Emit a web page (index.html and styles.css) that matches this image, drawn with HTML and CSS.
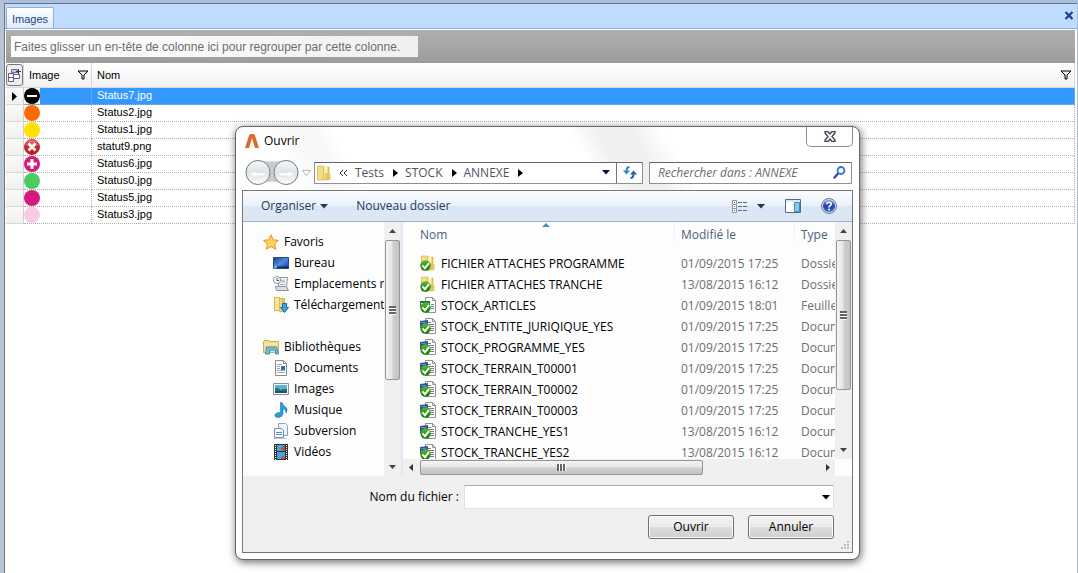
FILE: index.html
```html
<!DOCTYPE html>
<html lang="fr">
<head>
<meta charset="utf-8">
<title>Images</title>
<link rel="stylesheet" href="styles.css">
</head>
<body>
<svg class="symbols" aria-hidden="true">
  <defs>
    <linearGradient id="gold" x1="0" x2="1"><stop offset="0" stop-color="#f6e290"/><stop offset="1" stop-color="#dcb53e"/></linearGradient>
    <linearGradient id="green" x1="0" y1="0" x2="0" y2="1"><stop offset="0" stop-color="#5cb82e"/><stop offset="1" stop-color="#0d7a08"/></linearGradient>
    <linearGradient id="screen" x1="0" y1="0" x2="1" y2="1"><stop offset="0" stop-color="#1c3f9c"/><stop offset=".5" stop-color="#4f8be0"/><stop offset="1" stop-color="#173a8e"/></linearGradient>
    <linearGradient id="disc" x1="0" y1="0" x2="0" y2="1"><stop offset="0" stop-color="#f7f9fa"/><stop offset=".5" stop-color="#dfe4e8"/><stop offset="1" stop-color="#fdfefe"/></linearGradient>
    <linearGradient id="red" x1="0" y1="0" x2="0" y2="1"><stop offset="0" stop-color="#e88"/><stop offset=".5" stop-color="#cf2a2a"/><stop offset="1" stop-color="#d00808"/></linearGradient>
    <linearGradient id="help" x1="0" y1="0" x2="0" y2="1"><stop offset="0" stop-color="#7b9be8"/><stop offset=".5" stop-color="#1b3fb0"/><stop offset="1" stop-color="#3f6fdc"/></linearGradient>
  </defs>
  <symbol id="tick" viewBox="0 0 16 16">
    <circle cx="5.500" cy="10.500" r="5.200" fill="url(#green)"/>
    <path d="M2.500 10.500l2.500 2.700L9 8" fill="none" stroke="#fff" stroke-width="1.900"/>
  </symbol>
  <symbol id="folder" viewBox="0 0 16 16">
    <path d="M1.500 1h6v14h-6z" fill="#f3dd86" stroke="#d8b94e" stroke-width=".8"/>
    <path d="M7.500 2H13v13H7.500z" fill="url(#gold)" stroke="#d8b94e" stroke-width=".6"/><path d="M8.500 1h3v7h-3z" fill="#fdf4c4"/><path d="M12 9h2.500v6H12z" fill="#e6c65a"/>
  </symbol>
  <symbol id="i-folder" viewBox="0 0 16 16"><use href="#folder"/><use href="#tick"/></symbol>
  <symbol id="i-sheet" viewBox="0 0 16 16">
    <path d="M5.500.5h7l3 3v12h-10z" fill="#fff" stroke="#929292"/><path d="M12.500.5v3h3" fill="none" stroke="#929292"/>
    <path d="M8 7.500h2M8 9.500h2M8 11.500h2M11 7.500h3M11 9.500h3M11 11.500h3" stroke="#3e9a6b"/>
    <path d="M.5 4.500h9v5h-9z" fill="#fff" stroke="#1d7145"/><path d="M0 4h10v2H0z" fill="#1d7145"/><use href="#tick"/>
  </symbol>
  <symbol id="i-word" viewBox="0 0 16 16">
    <path d="M5.500.5h7l3 3v12h-10z" fill="#fff" stroke="#929292"/><path d="M12.500.5v3h3" fill="none" stroke="#929292"/>
    <path d="M8 4.500h3M8 6.500h6M8 8.500h6M8 10.500h6M8 12.500h6" stroke="#7d7d7d"/>
    <path d="M0 3l8-1v8H0z" fill="#2b579a"/><path d="M1 4.500h5" stroke="#5f8bc8"/><use href="#tick"/>
  </symbol>
  <symbol id="funnel" viewBox="0 0 12 10"><path d="M1 1h10L7 5v4H5V5z" fill="#ececec" stroke="#000"/></symbol>
</svg>

<main class="frame">
  <div class="tabbar">
    <button class="tab" type="button">Images</button>
    <button class="tabbar-close" type="button" aria-label="Fermer l'onglet">
      <svg width="10" height="9" viewBox="0 0 10 9"><path d="M1.500 1l7 7M8.500 1l-7 7" stroke="#15428b" stroke-width="2.200"/></svg>
    </button>
  </div>
  <div class="groupbar"><span class="grouphint">Faites glisser un en-tête de colonne ici pour regrouper par cette colonne.</span></div>
  <table class="grid">
    <colgroup><col class="col-mark"><col class="col-image"><col></colgroup>
    <thead>
      <tr>
        <th class="chooser"><button class="chooser-btn" type="button" aria-label="Choisir les colonnes">
          <svg width="15" height="16" viewBox="0 0 15 16"><path d="M1.500 6.500h5v8h-5zM6.500 7.500h6v4h-6z" fill="#fff" stroke="#5a5f8e"/><path d="M2 10.500h4" stroke="#5a5f8e"/><path d="M4.500 2.500h6v3h-6z" fill="#c3c6e0" stroke="#6d719c"/><path d="M9 4.500h5M11.500 2v5" stroke="#333964"/></svg>
        </button></th>
        <th><div class="head"><span>Image</span><svg width="12" height="10"><use href="#funnel"/></svg></div></th>
        <th><div class="head"><span>Nom</span><svg width="12" height="10"><use href="#funnel"/></svg></div></th>
      </tr>
    </thead>
    <tbody>
      <tr class="current"><td><svg class="marker" width="6" height="9"><path d="M0 0l5 4.500L0 9z"/></svg></td><td><svg class="pic" viewBox="0 0 16 16"><circle cx="8" cy="8" r="8"/><path d="M3 8h10" stroke="#fff" stroke-width="2"/></svg></td><td>Status7.jpg</td></tr>
      <tr><td></td><td><svg class="pic" viewBox="0 0 16 16"><circle cx="8" cy="8" r="8" fill="#ff6a00"/></svg></td><td>Status2.jpg</td></tr>
      <tr><td></td><td><svg class="pic" viewBox="0 0 16 16"><circle cx="8" cy="8" r="8" fill="#ffe100"/></svg></td><td>Status1.jpg</td></tr>
      <tr><td></td><td><svg class="pic" viewBox="0 0 16 16"><circle cx="8" cy="8" r="7.500" fill="url(#red)" stroke="#b33"/><path d="M4.500 4.500l7 7M11.500 4.500l-7 7" stroke="#fff" stroke-width="2.800"/></svg></td><td>statut9.png</td></tr>
      <tr><td></td><td><svg class="pic" viewBox="0 0 16 16"><circle cx="8" cy="8" r="8" fill="#d6187f"/><path d="M3 8h10M8 3v10" stroke="#fff" stroke-width="3"/></svg></td><td>Status6.jpg</td></tr>
      <tr><td></td><td><svg class="pic" viewBox="0 0 16 16"><circle cx="8" cy="8" r="8" fill="#4ccb60"/></svg></td><td>Status0.jpg</td></tr>
      <tr><td></td><td><svg class="pic" viewBox="0 0 16 16"><circle cx="8" cy="8" r="8" fill="#d6187f"/></svg></td><td>Status5.jpg</td></tr>
      <tr><td></td><td><svg class="pic" viewBox="0 0 16 16"><circle cx="8" cy="8" r="8" fill="#f8cce6"/></svg></td><td>Status3.jpg</td></tr>
    </tbody>
  </table>
</main>

<section class="dialog" role="dialog" aria-labelledby="dlg-title">
  <header class="titlebar">
    <svg width="14" height="14" viewBox="0 0 14 14"><path d="M0 14L4 1.500Q4.500 0 6 0h2q1.500 0 2 1.500L14 14h-4L7 4 4 14z" fill="#dd6a2c"/></svg>
    <h1 id="dlg-title" class="title">Ouvrir</h1>
    <button class="close" type="button" aria-label="Fermer">
      <svg width="12" height="11" viewBox="0 0 12 11"><path d="M1 .5h3l2 2.500 2-2.500h3v1.500L8 5.500 11 9v1.500H8L6 8l-2 2.500H1V9l3-3.500L1 2z" fill="#fff" stroke="#3c3f4c" stroke-width="1.300"/></svg>
    </button>
  </header>
  <div class="navbar">
    <div class="history">
      <svg width="56" height="28" viewBox="0 0 56 28">
        <path d="M14 1Q28 4 42 1a12 12 0 0 1 0 25Q28 19 14 26a12 12 0 0 1 0-25z" fill="#c9cbcd"/>
        <circle cx="14" cy="13.500" r="12" fill="url(#disc)" stroke="#7d8187"/><circle cx="42" cy="13.500" r="12" fill="url(#disc)" stroke="#7d8187"/>
        <path d="M5 14.500l7-3v2h10v2q-2 2-10 1.500v3z" fill="#fbfdfd" stroke="#dde2e5"/><path d="M51 14.500l-7-3v2H34v2q2 2 10 1.500v3z" fill="#fbfdfd" stroke="#dde2e5"/>
      </svg>
      <svg width="9" height="6" viewBox="0 0 9 6"><path d="M.5.5h8l-4 5z" fill="#fff" stroke="#b5b5b5"/></svg>
    </div>
    <div class="address">
      <nav class="crumbs" aria-label="Emplacement">
        <svg width="16" height="16"><use href="#folder"/></svg>
        <svg width="9" height="8" viewBox="0 0 9 8"><path d="M4 1L1 4l3 3M8 1L5 4l3 3" fill="none" stroke="#222"/></svg>
        <a class="crumb" href="#">Tests</a><a class="crumb" href="#">STOCK</a><a class="crumb" href="#">ANNEXE</a>
      </nav>
      <button class="flat" type="button" aria-label="Emplacements précédents"><svg width="8" height="5"><path d="M0 0h8L4 4.500z" fill="#0b0b45"/></svg></button>
      <button class="flat refresh" type="button" aria-label="Actualiser"><svg width="14" height="13" viewBox="0 0 14 13"><path d="M6.500 1Q3.500 1 3.500 5" fill="none" stroke="#2f83cf" stroke-width="2"/><path d="M0 4.500h7L3.500 8.500z" fill="#2f83cf"/><path d="M7.500 12q3 0 3-4" fill="none" stroke="#1f5fb0" stroke-width="2"/><path d="M7 8.500h7l-3.500-4z" fill="#1f5fb0"/></svg></button>
    </div>
    <div class="search">
      <input class="search-input" type="text" placeholder="Rechercher dans : ANNEXE" aria-label="Rechercher dans : ANNEXE">
      <svg width="13" height="13" viewBox="0 0 13 13"><path d="M1.500 11.500l4-4.500" stroke="#2b55a8" stroke-width="2.500" stroke-linecap="round"/><circle cx="8" cy="4.500" r="3.500" fill="#eef7ff" stroke="#3673c6" stroke-width="1.800"/></svg>
    </div>
  </div>
  <div class="client">
    <div class="toolbar">
      <button class="tool" type="button">Organiser<svg width="8" height="5"><path d="M0 0h8L4 4.500z" fill="#1e395b"/></svg></button>
      <button class="tool" type="button">Nouveau dossier</button>
      <div class="toolbar-right">
        <button class="tool views" type="button" aria-label="Affichage"><svg width="16" height="13" viewBox="0 0 16 13"><path d="M.5.5h4v4h-4zM.5 4.500h4v4h-4zM.5 8.500h4v4h-4z" fill="#fff" stroke="#8c949e"/><path d="M2 2.500h1M2 10.500h1" stroke="#2a6ab8"/><path d="M2 6.500h1" stroke="#d22"/><path d="M6 2.500h4M11 2.500h4M6 6.500h4M11 6.500h4M6 10.500h4M11 10.500h4" stroke="#5e6b7c"/></svg><svg width="8" height="5"><path d="M0 0h8L4 4.500z" fill="#1e395b"/></svg></button>
        <button class="tool" type="button" aria-label="Volet de visualisation"><svg width="16" height="14" viewBox="0 0 16 14"><path d="M.5.5h15v13H.5z" fill="#fff" stroke="#4f6a90"/><path d="M1 1h14v2H1z" fill="#dfe8f2"/><path d="M9.500 3.500h5v9h-5z" fill="#83cbe6" stroke="#3b8fb5"/></svg></button>
        <button class="tool" type="button" aria-label="Aide"><svg width="16" height="16" viewBox="0 0 16 16"><circle cx="8" cy="8" r="7.500" fill="#d9d9dd" stroke="#777b88"/><circle cx="8" cy="8" r="6" fill="url(#help)"/><path d="M5.800 6.200q0-2 2.200-2t2.200 1.800q0 1-1.200 1.700T8 9.500" fill="none" stroke="#fff" stroke-width="1.600"/><circle cx="8" cy="11.600" r="1" fill="#fff"/></svg></button>
      </div>
    </div>
    <div class="panes">
      <nav class="tree" aria-label="Volet de navigation">
        <ul class="group">
          <li class="node root"><svg width="16" height="16" viewBox="0 0 16 16"><path d="M8 .8l2.200 5 5.300.6-4 3.500 1.200 5.300L8 12.500l-4.700 2.700 1.200-5.300-4-3.500 5.300-.6z" fill="#ffd35c" stroke="#ee8d1c"/></svg>Favoris</li>
          <li class="node"><svg width="16" height="16" viewBox="0 0 16 16"><path d="M.5 2.500h15v11H.5z" fill="url(#screen)" stroke="#2a4a7c"/><path d="M1 11.500h14V13H1z" fill="#0e2d5c"/><circle cx="2.500" cy="12" r="1.500" fill="#6fc1ef"/></svg>Bureau</li>
          <li class="node"><svg width="16" height="16" viewBox="0 0 16 16"><path d="M5.500 1.500h9l-1 9h-8z" fill="#f3f5f7" stroke="#8d9399"/><path d="M8 3.500h4v3H8z" fill="#a9cbe0"/><path d="M7 8.500h5" stroke="#8fb0c8"/><path d="M2.500 10.500h11l2 4h-12z" fill="#dcdfe2" stroke="#8d9399"/><circle cx="4" cy="4" r="3.500" fill="#fff" stroke="#8d9399"/><path d="M4 2v2.500h2" fill="none" stroke="#555"/></svg>Emplacements récents</li>
          <li class="node"><svg width="16" height="16" viewBox="0 0 16 16"><path d="M1.500.5h5v13h-5z" fill="#f6e6a0" stroke="#d8b854"/><path d="M6.500 1.500h5v13h-5z" fill="url(#gold)" stroke="#d8b854"/><path d="M9.500 6.500h4v4h2l-4 5-4-5h2z" fill="#39a2e8" stroke="#1669b2"/></svg>Téléchargements</li>
        </ul>
        <ul class="group">
          <li class="node root"><svg width="16" height="16" viewBox="0 0 16 16"><path d="M.5 2.500l1-1h5l1 1h8v11H.5z" fill="#f4dc84" stroke="#cfae4c"/><path d="M1 5h14" stroke="#fff3c0"/><path d="M2.500 15l1-7h10l2 7h-3v-4h-6v4z" fill="#6fc0e6" stroke="#3c8fbb"/></svg>Bibliothèques</li>
          <li class="node"><svg width="16" height="16" viewBox="0 0 16 16"><path d="M2.500.5h8l3 3v12h-11z" fill="#fff" stroke="#868b91"/><path d="M10.500.5v3h3" fill="none" stroke="#868b91"/><path d="M4 4.500h5M4 6.500h3M4 8.500h3M4 10.500h8M4 12.500h8" stroke="#9ab"/><path d="M8 6h4v4H8z" fill="#2b6fc0"/></svg>Documents</li>
          <li class="node"><svg width="16" height="16" viewBox="0 0 16 16"><path d="M.5 2.500h15v11H.5z" fill="#fff" stroke="#8a8f95"/><path d="M2 4h12v8H2z" fill="#56b4e4"/><path d="M2 7q3-1 6 2 3-2 6-1v4H2z" fill="#2c7a5a"/><path d="M2 10h12v2H2z" fill="#1d4f86"/></svg>Images</li>
          <li class="node"><svg width="16" height="16" viewBox="0 0 16 16"><path d="M9 .5q1 3 3.500 4.500 3 2 .5 6 .5-3-3-4.500v5q-.5 3.500-4.500 4-4.500 0-3.500-3Q3.500 10 7.500 10.500V.5z" fill="#2f9ae0" stroke="#1c6fb8" stroke-width=".6"/></svg>Musique</li>
          <li class="node"><svg width="16" height="16" viewBox="0 0 16 16"><path d="M5.500.5h7l2 2v10h-9z" fill="#eef4fb" stroke="#8ea3bd"/><path d="M1.500 5.500h7l2 2v7h-9z" fill="#f7fafe" stroke="#6f8fb8"/><path d="M3 9.500h6M3 11.500h6" stroke="#5b86bf"/><path d="M0 15.500h14" stroke="#b9c6d6"/></svg>Subversion</li>
          <li class="node"><svg width="16" height="16" viewBox="0 0 16 16"><path d="M1 0h14v16H1z" fill="#2e3338"/><path d="M4 1h8v6H4zM4 8h8v7H4z" fill="#4ba3dc"/><path d="M8 4l4-3v6H9zM9 12l3 1v2H8z" fill="#b5573c"/><path d="M2.500 1v15M13.500 1v15" stroke="#fff" stroke-dasharray="1 1"/></svg>Vidéos</li>
        </ul>
      </nav>
      <div class="vscroll" aria-hidden="true">
        <svg width="7" height="4"><path d="M0 4h7L3.500 0z" fill="#444"/></svg>
        <div class="track"><div class="thumb thumb-tree"><i class="ridges"></i></div></div>
        <svg width="7" height="4"><path d="M0 0h7L3.500 4z" fill="#444"/></svg>
      </div>
      <div class="listpane">
        <div class="listrow">
          <div class="listview">
            <table class="files">
              <colgroup><col><col class="col-date"><col class="col-type"></colgroup>
              <thead><tr><th>Nom<svg class="sort" width="8" height="4"><path d="M0 4h8L4 0z" fill="#4f8fb5"/></svg></th><th>Modifié le</th><th>Type</th></tr></thead>
              <tbody>
                <tr><td><svg width="16" height="16"><use href="#i-folder"/></svg>FICHIER ATTACHES PROGRAMME</td><td>01/09/2015 17:25</td><td>Dossier de fichiers</td></tr>
                <tr><td><svg width="16" height="16"><use href="#i-folder"/></svg>FICHIER ATTACHES TRANCHE</td><td>13/08/2015 16:12</td><td>Dossier de fichiers</td></tr>
                <tr><td><svg width="16" height="16"><use href="#i-sheet"/></svg>STOCK_ARTICLES</td><td>01/09/2015 18:01</td><td>Feuille</td></tr>
                <tr><td><svg width="16" height="16"><use href="#i-word"/></svg>STOCK_ENTITE_JURIQIQUE_YES</td><td>01/09/2015 17:25</td><td>Document</td></tr>
                <tr><td><svg width="16" height="16"><use href="#i-word"/></svg>STOCK_PROGRAMME_YES</td><td>01/09/2015 17:25</td><td>Document</td></tr>
                <tr><td><svg width="16" height="16"><use href="#i-word"/></svg>STOCK_TERRAIN_T00001</td><td>01/09/2015 17:25</td><td>Document</td></tr>
                <tr><td><svg width="16" height="16"><use href="#i-word"/></svg>STOCK_TERRAIN_T00002</td><td>01/09/2015 17:25</td><td>Document</td></tr>
                <tr><td><svg width="16" height="16"><use href="#i-word"/></svg>STOCK_TERRAIN_T00003</td><td>01/09/2015 17:25</td><td>Document</td></tr>
                <tr><td><svg width="16" height="16"><use href="#i-word"/></svg>STOCK_TRANCHE_YES1</td><td>13/08/2015 16:12</td><td>Document</td></tr>
                <tr><td><svg width="16" height="16"><use href="#i-word"/></svg>STOCK_TRANCHE_YES2</td><td>13/08/2015 16:12</td><td>Document</td></tr>
              </tbody>
            </table>
          </div>
          <div class="vscroll" aria-hidden="true">
            <svg width="7" height="4"><path d="M0 4h7L3.500 0z" fill="#444"/></svg>
            <div class="track"><div class="thumb thumb-list"><i class="ridges"></i></div></div>
            <svg width="7" height="4"><path d="M0 0h7L3.500 4z" fill="#444"/></svg>
          </div>
        </div>
        <div class="hscroll" aria-hidden="true">
          <svg width="4" height="7"><path d="M4 0v7L0 3.500z" fill="#333"/></svg>
          <div class="htrack"><div class="hthumb"><i class="ridges upright"></i></div></div>
          <svg width="4" height="7"><path d="M0 0v7l4-3.500z" fill="#333"/></svg>
        </div>
      </div>
    </div>
    <form class="footer">
      <div class="field">
        <label for="filename">Nom du fichier :</label>
        <div class="combo"><input class="combo-input" id="filename" type="text"><button class="flat" type="button" aria-label="Fichiers récents"><svg width="8" height="5"><path d="M0 0h8L4 4.500z"/></svg></button></div>
      </div>
      <div class="actions"><button class="btn" type="button">Ouvrir</button><button class="btn" type="button">Annuler</button></div>
      <svg class="grip" width="9" height="9" viewBox="0 0 9 9"><path d="M6 0h2v2H6zM3 3h2v2H3zM6 3h2v2H6zM0 6h2v2H0zM3 6h2v2H3zM6 6h2v2H6z" fill="#bcbcbc"/></svg>
    </form>
  </div>
</section>
</body>
</html>
```

FILE: styles.css
```css
* { box-sizing: border-box; }
body { margin: 0; background: #fff; color: #000; font: 11px/16px "Liberation Sans", Arial, sans-serif; }
svg { display: block; flex: none; }
button, input { font: inherit; color: inherit; margin: 0; padding: 0; border: 0; background: none; }
.symbols { position: absolute; width: 0; height: 0; }

/* Main window */
.frame { min-height: 100vh; padding-right: 2px; background: linear-gradient(90deg, #777 1px, #fff 1px); border-left: 4px solid #b6c4d6; border-right: 1px solid #a9bfdc; border-top: 3px solid #a4bfe2; }
.tabbar { display: flex; align-items: flex-end; justify-content: space-between; height: 26px; margin: 0 -2px 0 1px; padding-left: 1px; background: #bfdbff; border-top: 1px solid #6f6f6f; border-bottom: 1px solid #8db2e3; }
.tab { height: 21px; padding: 1px 5px 0; color: #15428b; border: 1px solid #8db2e3; border-bottom: 0; border-radius: 2px 2px 0 0; background: linear-gradient(#fff, #e0ecfb); }
.tabbar-close { padding: 0 3px 8px; }
.groupbar { margin: 1px 0 0 2px; padding: 6px 5px; height: 33px; background: linear-gradient(#b0b0b0, #9c9c9c); }
.grouphint { display: inline-block; height: 21px; padding: 0 18px 0 3px; font-size: 12px; line-height: 23px; color: #6d6d6d; background: linear-gradient(90deg, #fff, #f0f0f0); white-space: nowrap; }

.grid { width: 100%; padding-left: 2px; table-layout: fixed; border-collapse: separate; border-spacing: 0; }
.col-mark { width: 18px; }
.col-image { width: 68px; }
.grid th { height: 25px; padding: 0; font-weight: normal; text-align: left; background: linear-gradient(#fff, #f2f2f2); border-right: 1px solid #d8d8d8; border-bottom: 1px solid #d8d8d8; }
.head { display: flex; align-items: center; justify-content: space-between; padding: 0 2px 0 5px; }
.chooser-btn { display: grid; place-items: center; width: 17px; height: 22px; border: 1px solid #777; border-radius: 3px; background: #eee; }
.grid td { height: 17px; padding: 0 0 0 5px; line-height: 14px; vertical-align: top; border-bottom: 1px dotted #b0b0b0; border-right: 1px dotted #b0b0b0; }
.grid td:first-child { padding: 0; background: linear-gradient(#fafafa, #f0f0f0); border-right: 1px solid #d0d0d0; border-bottom: 1px solid #d8d8d8; }
.grid td:nth-child(2) { padding: 0; }
.current td { color: #fff; background: #3399ff; }
.pic { width: 16px; height: 16px; background: #fff; }
.marker { margin: 4px 0 0 6px; }

/* File dialog */
.dialog { position: absolute; left: 235px; top: 126px; width: 625px; padding: 0 6px 6px; border: 1px solid #666; border-radius: 8px; background: linear-gradient(60deg, #fff 0 10%, #f8f8f8 14% 17%, #fff 20% 56%, #f0f0f0 60% 65%, #fff 70%) top / 100% 64px no-repeat #fff; box-shadow: 1px 2px 8px rgba(0, 0, 0, .6); font: 12px/16px "Open Sans", "Noto Sans", sans-serif; }
.titlebar { display: flex; align-items: center; gap: 5px; height: 28px; padding-left: 3px; }
.title { margin: 0; font-size: 12px; font-weight: normal; }
.close { display: grid; place-items: center; align-self: flex-start; width: 47px; height: 20px; margin-left: auto; border: 1px solid #8c8c8c; border-top: 0; border-radius: 0 0 5px 5px; background: #fff; }
.navbar { display: flex; align-items: center; gap: 6px; height: 35px; padding: 0 1px 0 2px; }
.history { display: flex; align-items: center; gap: 2px; width: 64px; }
.address, .search { display: flex; align-items: center; height: 22px; border: 1px solid #8f8f8f; border-top-color: #666; border-radius: 1px; background: #fff; }
.address { flex: 1; }
.crumbs { display: flex; flex: 1; align-items: center; gap: 7px; padding-left: 1px; color: #4c5662; }
.crumb { display: flex; align-items: center; gap: 9px; color: inherit; text-decoration: none; }
.crumb::after { content: ""; border: 4px solid transparent; border-left: 5px solid #000; border-right: 0; }
.flat { display: grid; place-items: center; width: 20px; height: 20px; }
.refresh { width: 26px; border-left: 1px solid #777; }
.search { width: 203px; padding: 0 5px 0 8px; }
.search-input { flex: 1; min-width: 0; font-style: italic; outline: 0; }
.search-input::placeholder { color: #6d6d6d; opacity: 1; }

.client { border: 1px solid #777; background: #f0f0f0; }
.toolbar { display: flex; align-items: center; gap: 28px; height: 31px; padding: 0 15px 0 18px; color: #1e395b; border-bottom: 1px solid #a0b0c8; background: linear-gradient(#fbfdff, #e9f1fa 50%, #dce7f5 51%, #dce6f3); }
.tool { display: flex; align-items: center; gap: 4px; }
.toolbar-right { display: flex; align-items: center; gap: 20px; margin-left: auto; }
.views { gap: 9px; }
.panes { display: flex; height: 254px; background: #fdfdfd; }
.tree { width: 141px; padding-top: 9px; overflow: hidden; }
.group { margin: 0 0 21px; padding: 0; list-style: none; }
.node { display: flex; align-items: center; gap: 5px; height: 21px; padding-left: 30px; white-space: nowrap; }
.root { padding-left: 20px; }

.vscroll { display: flex; flex-direction: column; align-items: center; width: 17px; padding: 7px 0; background: #f0f0f0; }
.track { flex: 1; width: 15px; margin: 7px 0; }
.thumb { display: grid; place-items: center; border: 1px solid #959595; border-radius: 2px; background: linear-gradient(90deg, #f5f5f5, #e6e6e8 45%, #cfcfd2 55%, #c4c4c8); }
.thumb-tree { height: 140px; }
.thumb-list { height: 150px; }
.ridges { width: 7px; height: 9px; background: repeating-linear-gradient(#666 0 2px, #fff 2px 3px); }
.upright { width: 9px; height: 7px; background: repeating-linear-gradient(90deg, #666 0 2px, #fff 2px 3px); }
.listpane { display: flex; flex: 1; min-width: 0; flex-direction: column; border-left: 2px solid #dfe9f5; }
.listrow { display: flex; flex: 1; min-height: 0; }
.listview { flex: 1; min-width: 0; overflow: hidden; }
.files { width: 100%; table-layout: fixed; border-collapse: separate; border-spacing: 0; }
.col-date { width: 120px; }
.col-type { width: 40px; }
.files th { position: relative; height: 31px; padding: 5px 6px 0; font-weight: normal; text-align: left; vertical-align: top; color: #4c607a; background: linear-gradient(#dfeaf6, #fdfdfd) right top / 1px 24px no-repeat; white-space: nowrap; }
.files th:last-child { padding-right: 0; background: none; }
.files td { height: 21px; padding: 0 0 0 6px; line-height: 21px; color: #6d6d6d; white-space: nowrap; overflow: hidden; }
.files th:first-child, .files td:first-child { padding-left: 17px; }
.files td:first-child { color: #000; }
.files td svg { float: left; margin: 2px 5px 0 0; }
.sort { position: absolute; top: 1px; left: 51%; }
.hscroll { display: flex; align-items: center; gap: 7px; height: 17px; margin-right: 17px; padding: 0 5px 0 6px; background: #f0f0f0; }
.htrack { flex: 1; }
.hthumb { display: grid; place-items: center; width: 71%; height: 15px; border: 1px solid #959595; border-radius: 2px; background: linear-gradient(#f5f5f5, #e6e6e8 45%, #cfcfd2 55%, #c4c4c8); }

.footer { position: relative; display: grid; gap: 6px; padding: 9px 18px 13px; }
.field { display: flex; align-items: center; justify-content: flex-end; gap: 5px; }
.combo { display: flex; align-items: center; width: 370px; height: 24px; border: 1px solid #dde1ea; border-top-color: #abadb3; background: #fff; }
.combo-input { flex: 1; min-width: 0; height: 100%; padding: 0 4px; outline: 0; }
.combo .flat { width: 15px; }
.actions { display: flex; justify-content: flex-end; gap: 14px; }
.btn { width: 86px; height: 24px; border: 1px solid #707070; border-radius: 3px; background: linear-gradient(#f3f3f3, #ebebeb 49%, #dddddd 50%, #cfcfcf); box-shadow: inset 0 0 0 1px #fafafa; }
.grip { position: absolute; right: 2px; bottom: 2px; }
```
